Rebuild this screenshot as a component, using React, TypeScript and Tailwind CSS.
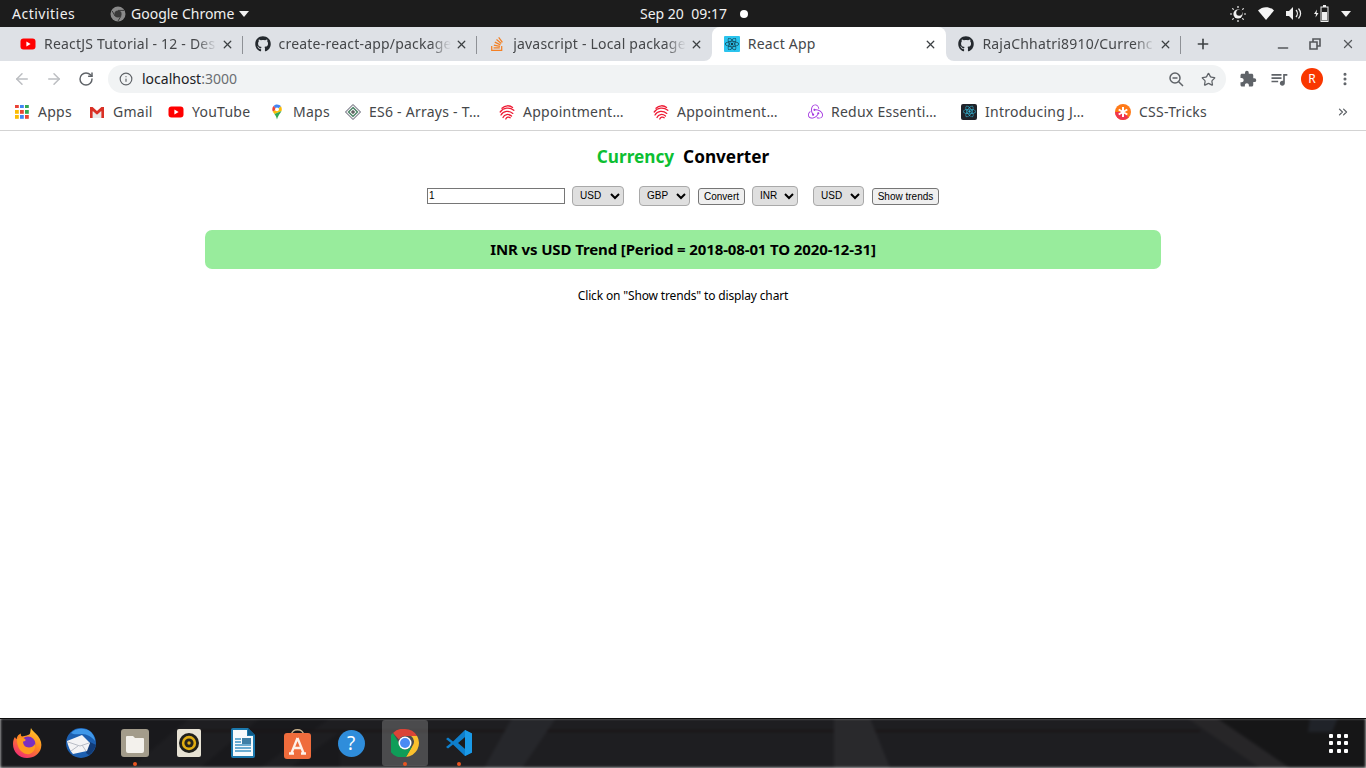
import { ArrowLeft, ArrowRight, RotateCw, Info, Star, MoreVertical, X, Plus, Minus, ChevronsRight } from "lucide-react"
import { FaGithub, FaReact, FaStackOverflow } from "react-icons/fa"
import { MdExtension, MdQueueMusic } from "react-icons/md"
import { SiRedux } from "react-icons/si"
import type { ReactNode } from "react"

const uiFont = "font-['Noto_Sans','Open_Sans',sans-serif]"

// Favicons
function YoutubeIcon() {
  return (
    <svg width="16" height="16" viewBox="0 0 16 16">
      <rect x="0.5" y="2.5" width="15" height="11" rx="3" fill="#f00" />
      <path d="M6.4 5.4 10.6 8l-4.2 2.6z" fill="#fff" />
    </svg>
  )
}

function ReactFavicon() {
  return (
    <div className="flex h-4 w-4 items-center justify-center rounded-[1px] bg-[#2bc4ee]">
      <FaReact size={14} color="#123a4a" />
    </div>
  )
}

function AppsIcon() {
  const colors = ["#ea4335", "#4285f4", "#34a853", "#fbbc05", "#ea4335", "#34a853", "#fbbc05", "#4285f4", "#ea4335"]
  return (
    <div className="grid h-[14px] w-[14px] grid-cols-3 gap-[1.5px]">
      {colors.map((c, i) => (
        <svg key={i} width="3.8" height="3.8" viewBox="0 0 4 4">
          <rect width="4" height="4" fill={c} />
        </svg>
      ))}
    </div>
  )
}

function GmailIcon() {
  return (
    <svg width="16" height="16" viewBox="0 0 16 16">
      <path d="M1 3h2.6L8 7l4.4-4H15v11h-2.8V7.2L8 11 3.8 7.2V14H1z" fill="#d93025" />
      <path d="M3.8 7.2 8 11l4.2-3.8V14H3.8z" fill="#e8e8e8" />
    </svg>
  )
}

function MapsIcon() {
  return (
    <svg width="16" height="16" viewBox="0 0 16 16">
      <path d="M8 0.5c-1.4 0-2.7.6-3.5 1.6L8 5.5l4-3.2C11.200 1.200 9.700.5 8 .5z" fill="#4285f4" />
      <path d="M4.500 2.100A5 5 0 0 0 3.300 5.300c0 .9.2 1.600.5 2.300L8 5.500z" fill="#ea4335" />
      <path d="M12 2.300 8 5.500l-4.200 2.100c.4.900 1 1.700 1.600 2.500L12.500 7c.2-.5.300-1 .300-1.700 0-1.100-.3-2.100-.8-3z" fill="#fbbc05" />
      <path d="M5.400 10.100C6.300 11.300 7.300 12.600 8 15.500c.7-2.900 2-4.500 3-5.900.6-.8 1.100-1.700 1.500-2.600z" fill="#34a853" />
      <circle cx="8" cy="5.300" r="1.900" fill="#fff" />
    </svg>
  )
}

function Es6Icon() {
  return (
    <svg width="16" height="16" viewBox="0 0 16 16">
      <path d="M8 .5 15.500 8 8 15.500.5 8z" fill="#f4f4f4" stroke="#556" strokeWidth="1" />
      <path d="M8 3.500 12.500 8 8 12.500 3.500 8z" fill="none" stroke="#3d7a5a" strokeWidth="1.200" />
      <path d="M6 8h4M8 6v4" stroke="#333" strokeWidth="1" />
    </svg>
  )
}

function FingerprintIcon() {
  return (
    <svg width="16" height="16" viewBox="0 0 16 16" fill="none" stroke="#ee1c34" strokeWidth="1.300" strokeLinecap="round">
      <path d="M3 4.200C6 1.200 10.500 1 13.600 3.400" />
      <path d="M1.200 8C4.500 3.500 10.500 3 14.800 6.300" />
      <path d="M2 11c2.500-4.200 8-4.800 11.800-1.600" />
      <path d="M4 13.500c1.500-3.400 5.500-4 8.500-1.500" />
      <path d="M6.800 15c.8-2 2.800-2.500 4.400-1.300" />
    </svg>
  )
}

function CssTricksIcon() {
  return (
    <svg width="16" height="16" viewBox="0 0 16 16">
      <circle cx="8" cy="8" r="8" fill="#ff7a18" />
      <path d="M0 8a8 8 0 0 0 8 8 8 8 0 0 0 5.700-2.400L8 8z" fill="#f0354f" />
      <path d="M8 3v10M3.700 5.500l8.600 5M3.700 10.500l8.600-5" stroke="#fff" strokeWidth="2" />
    </svg>
  )
}

function Tab({ icon, title, active, separator, rounded }: { icon: ReactNode; title: string; active?: boolean; separator?: boolean; rounded?: string }) {
  return (
    <div className={`relative flex h-full w-[234.6px] items-center pl-3 pr-[9px] ${active ? "rounded-t-[8px] bg-white" : rounded ?? ""}`}>
      {active && (
        <>
          <div className="absolute bottom-0 left-[-8px] h-2 w-2 bg-white">
            <div className="h-full w-full rounded-br-[8px] bg-[#dee1e6]" />
          </div>
          <div className="absolute bottom-0 right-[-8px] h-2 w-2 bg-white">
            <div className="h-full w-full rounded-bl-[8px] bg-[#dee1e6]" />
          </div>
        </>
      )}
      <div className="flex h-4 w-4 shrink-0 items-center justify-center">{icon}</div>
      <div className={`mb-[2px] ml-2 min-w-0 flex-1 overflow-hidden whitespace-nowrap text-[14px] tracking-[0.2px] text-[#45474a] ${active ? "" : "[mask-image:linear-gradient(to_right,black_88%,transparent_100%)]"}`}>
        {title}
      </div>
      <X size={13} strokeWidth={2.4} className="ml-1 shrink-0 text-[#3c4043]" />
      {separator && <div className="absolute right-0 top-[9px] h-[18px] w-px bg-[#8e9196]" />}
    </div>
  )
}

function Bookmark({ icon, label, width }: { icon: ReactNode; label: string; width: string }) {
  return (
    <div className={`flex shrink-0 items-center gap-2 ${width}`}>
      <div className="flex h-4 w-4 shrink-0 items-center justify-center">{icon}</div>
      <span className="whitespace-nowrap text-[14px] tracking-[0.25px] text-[#45474a]">{label}</span>
    </div>
  )
}

// Dock icons
function FirefoxIcon() {
  return (
    <svg width="30" height="32" viewBox="0 0 30 32">
      <defs>
        <linearGradient id="ff" x1="0.8" y1="0" x2="0.2" y2="1">
          <stop offset="0" stopColor="#ffc92e" />
          <stop offset="0.45" stopColor="#ff8a1e" />
          <stop offset="1" stopColor="#f0247a" />
        </linearGradient>
      </defs>
      <path d="M19 1c1 3 5 5 7 8 3 4 4 8 3 12-1.500 6-7 10-14 10C7 31 1 25 1 17c0-3 .8-5.500 2-7 .3 1 .8 1.800 1.500 2.300C5 9 7 7 9 6.500c-.5 1.500 0 2.500 1 3 3-1 7-1 8-3 .5-2 .5-4 1-5.500z" fill="url(#ff)" />
      <circle cx="16" cy="17" r="7.500" fill="#7a2fc0" />
      <path d="M5 12c3-2 6-1.500 8 0 1.500 1.200 0 2.500-2 2.500 0 3 2 6 6 6s6-3 6.500-5C24 23 20 28 14.500 27 9 26 4.500 20 5 12z" fill="#ff9a1f" />
    </svg>
  )
}

function ThunderbirdIcon() {
  return (
    <svg width="32" height="32" viewBox="0 0 32 32">
      <circle cx="16" cy="16" r="15" fill="#1c5fb0" />
      <path d="M6 6c4-5 14-6 20-1 3 3 4 7 4 9-3-4-8-7-13-7-4 0-8 1-11-1z" fill="#3f97e8" />
      <path d="M24 28c3-2 6-6 7-10l-6-3-4 11z" fill="#123c78" />
      <path d="M2 14 17 8l8 8-3 8-14 3c-3-3-5-8-6-13z" fill="#f3f3f5" />
      <path d="M3 15l12 4 9-3M6 24l7-5M21 24l-4-6" fill="none" stroke="#b8bcc6" strokeWidth="1" />
    </svg>
  )
}

function FilesIcon() {
  return (
    <svg width="28" height="28" viewBox="0 0 28 28">
      <rect width="28" height="28" rx="3" fill="#a39c8b" />
      <path d="M5 8a1 1 0 0 1 1-1h6l2 2h8a1 1 0 0 1 1 1v12a2 2 0 0 1-2 2H7a2 2 0 0 1-2-2z" fill="#f3f1ec" />
    </svg>
  )
}

function RhythmboxIcon() {
  return (
    <svg width="24" height="28" viewBox="0 0 24 28">
      <rect width="24" height="28" rx="2" fill="#e7e2d4" />
      <circle cx="12" cy="14" r="10" fill="#1f1f1c" />
      <circle cx="12" cy="14" r="7.200" fill="#e0ad12" />
      <circle cx="12" cy="14" r="4.600" fill="#26241d" />
      <circle cx="12" cy="14" r="1.700" fill="#e0ad12" />
    </svg>
  )
}

function WriterIcon() {
  return (
    <svg width="24" height="30" viewBox="0 0 24 30">
      <path d="M0 2a2 2 0 0 1 2-2h15l7 7v21a2 2 0 0 1-2 2H2a2 2 0 0 1-2-2z" fill="#1b78ad" />
      <path d="M2 2h14v6h6v20H2z" fill="#f6fafc" />
      <path d="M17 0l7 7h-7z" fill="#0d5b88" />
      <rect x="11" y="10" width="9" height="6" fill="#3d7fa6" />
      <path d="M4 11h6M4 14h6M4 17h16M4 20h16M4 23h16" stroke="#3d93c2" strokeWidth="1.500" />
    </svg>
  )
}

function StoreIcon() {
  return (
    <svg width="27" height="31" viewBox="0 0 27 31">
      <path d="M7.500 7c0-7 12-7 12 0" fill="none" stroke="#cdb48e" strokeWidth="1.500" />
      <rect y="5" width="27" height="26" rx="3" fill="#ef6c3c" />
      <path d="M13.500 10 7.500 25M13.500 10l6 15M9.500 20h8M5 25.500h5M17 25.500h5" stroke="#fdf1ea" strokeWidth="2.300" fill="none" />
    </svg>
  )
}

function ChromeIcon({ size = 28 }: { size?: number }) {
  return (
    <svg width={size} height={size} viewBox="0 0 28 28">
      <path d="M14 0a14 14 0 0 1 12.100 7H14a7 7 0 0 0-6.100 3.500L2 3.900A14 14 0 0 1 14 0z" fill="#db4437" />
      <path d="M26.100 7A14 14 0 0 1 15 28l6.100-10.500A7 7 0 0 0 20.100 7z" fill="#fbc02d" />
      <path d="M15 28A14 14 0 0 1 2 3.900l5.900 10.100a7 7 0 0 0 8.100 6.600l5.100-3.100z" fill="#0f9d58" />
      <circle cx="14" cy="14" r="6.500" fill="#fff" />
      <circle cx="14" cy="14" r="5" fill="#4a8af4" />
    </svg>
  )
}

function VscodeIcon() {
  return (
    <svg width="28" height="28" viewBox="0 0 28 28">
      <path d="M20 1 27 4.500v19L20 27 8 15.500 3 19.500 1 18l5-4-5-4 2-1.500 5 4z" fill="#0e7fcd" />
      <path d="M20 1 27 4.500v19L20 27V20L13 14l7-6z" fill="#1a9ae8" />
      <path d="M20 8l-7 6 7 6z" fill="#1c1c1e" />
    </svg>
  )
}

function DockSlot({ children, running, active }: { children: ReactNode; running?: boolean; active?: boolean }) {
  return (
    <div className="relative flex h-full w-[54px] items-center justify-center">
      {active && <div className="absolute left-[4px] top-[2px] h-[46px] w-[46px] rounded-[3px] bg-white/20" />}
      <div className="relative flex items-center justify-center">{children}</div>
      {running && <div className="absolute bottom-[2px] left-[25px] h-1 w-1 rounded-full bg-[#e95420]" />}
    </div>
  )
}

function Wallpaper() {
  return (
    <>
      <svg className="absolute inset-0 blur-[1.5px]" width="1366" height="50" viewBox="0 0 1366 50">
        <rect width="1366" height="50" fill="#1e1e21" />
        <rect width="340" height="50" fill="#19191c" />
        <path d="M130 50 190 0h70l-60 50zM260 50 330 0h30l-70 50z" fill="#1e1e21" />
        <rect x="200" y="12" width="1000" height="2" fill="#191415" />
        <path d="M512 0h44l-34 50h-38z" fill="#26272b" />
        <path d="M834 0h36l20 50h-56z" fill="#29292c" />
        <path d="M1187 0h30l73 50h-30z" fill="#272628" />
        <path d="M1217 0h149v50h-76z" fill="#161617" />
        <path d="M1310 0h28l-6 14h-24z" fill="#202329" />
      </svg>
      <div className="absolute inset-x-0 top-0 h-px bg-[#0c0c0c]" />
    </>
  )
}

function FormSelect({ value, width }: { value: string; width: string }) {
  return (
    <select
      defaultValue={value}
      className={`h-[20px] appearance-auto rounded-[4px] border border-[#a9a9a9] bg-[#dfdfdf] pb-[1px] pl-[3px] text-[10px] text-black ${width}`}
    >
      <option>{value}</option>
    </select>
  )
}

export default function App() {
  return (
    <div className={`flex h-screen w-full flex-col overflow-hidden bg-white ${uiFont}`}>
      {/* GNOME top bar */}
      <div className="flex h-[27px] shrink-0 items-center bg-[#1c1c1c] text-[14px] text-[#f0f0f0]">
        <div className="flex w-[640px] shrink-0 items-center">
          <span className="ml-3 w-[98px] tracking-[0.5px]">Activities</span>
          <ChromeGray />
          <span className="ml-[5px]">Google Chrome</span>
          <Caret className="ml-[5px]" />
        </div>
        <span className="whitespace-pre">Sep 20  09:17</span>
        <div className="ml-[13px] h-[8px] w-[8px] rounded-full bg-white" />
        <div className="flex-1" />
        <div className="flex items-center">
          <TrayIcons />
        </div>
      </div>

      {/* Chrome tab strip */}
      <div className="flex h-[34px] shrink-0 items-center bg-[#dee1e6] pl-2">
        <Tab icon={<YoutubeIcon />} title="ReactJS Tutorial - 12 - Des" separator />
        <Tab icon={<FaGithub size={16} color="#24292e" />} title="create-react-app/package" separator />
        <Tab icon={<FaStackOverflow size={16} color="#f48024" />} title="javascript - Local package" />
        <Tab icon={<ReactFavicon />} title="React App" active />
        <Tab icon={<FaGithub size={16} color="#24292e" />} title="RajaChhatri8910/Currenc" separator />
        <Plus size={16} strokeWidth={2.4} className="ml-[14px] text-[#3c4043]" />
        <div className="ml-[64px] flex items-center text-[#55585c]">
          <Minus size={16} strokeWidth={2} className="mt-[8px]" />
          <svg width="12" height="12" viewBox="0 0 12 12" fill="none" stroke="#55585c" strokeWidth="1.600" className="ml-[18px]">
            <path d="M1 4h7v7H1zM4 4V1h7v7H8" />
          </svg>
          <X size={14} strokeWidth={2.2} className="ml-[20px]" />
        </div>
      </div>

      {/* Toolbar */}
      <div className="flex h-[32px] shrink-0 items-center bg-white pt-1 text-[#5f6368]">
        <ArrowLeft size={18} strokeWidth={2} className="ml-[13px] text-[#bcbec2]" />
        <ArrowRight size={18} strokeWidth={2} className="ml-[14px] text-[#bcbec2]" />
        <RotateCw size={16} strokeWidth={2.2} className="ml-[15px] text-[#5f6368]" />
        <div className="ml-[14px] flex h-7 w-[1118px] items-center rounded-full bg-[#f1f3f4] pl-[11px] pr-[10px]">
          <Info size={14} strokeWidth={2} className="text-[#5f6368]" />
          <span className="mb-[2px] ml-[9px] text-[14px] text-[#202124]">
            localhost<span className="text-[#6b6e72]">:3000</span>
          </span>
          <div className="flex-1" />
          <ZoomOutIcon />
          <Star size={15} strokeWidth={2} className="ml-[17px] text-[#5f6368]" />
        </div>
        <MdExtension size={18} className="ml-[13px] text-[#5f6368]" />
        <MdQueueMusic size={20} className="ml-[12px] text-[#5f6368]" />
        <div className="ml-[12px] flex h-[22px] w-[22px] items-center justify-center rounded-full bg-[#f93700] text-[12px] text-white">R</div>
        <MoreVertical size={16} strokeWidth={2.6} className="ml-[14px] text-[#5f6368]" />
      </div>

      {/* Bookmarks bar */}
      <div className="flex h-[38px] shrink-0 items-center border-b border-[#d3d3d3] bg-white pl-[14px]">
        <Bookmark icon={<AppsIcon />} label="Apps" width="w-[75px]" />
        <Bookmark icon={<GmailIcon />} label="Gmail" width="w-[79px]" />
        <Bookmark icon={<YoutubeIcon />} label="YouTube" width="w-[101px]" />
        <Bookmark icon={<MapsIcon />} label="Maps" width="w-[76px]" />
        <Bookmark icon={<Es6Icon />} label="ES6 - Arrays - T…" width="w-[154px]" />
        <Bookmark icon={<FingerprintIcon />} label="Appointment…" width="w-[154px]" />
        <Bookmark icon={<FingerprintIcon />} label="Appointment…" width="w-[154px]" />
        <Bookmark icon={<SiRedux size={15} color="#a335e0" />} label="Redux Essenti…" width="w-[154px]" />
        <Bookmark icon={<div className="flex h-4 w-4 items-center justify-center rounded-[2px] bg-[#20232a]"><FaReact size={13} color="#35b8d8" /></div>} label="Introducing J…" width="w-[154px]" />
        <Bookmark icon={<CssTricksIcon />} label="CSS-Tricks" width="w-[154px]" />
        <div className="flex-1" />
        <ChevronsRight size={14} strokeWidth={2.2} className="mr-[16px] text-[#5f6368]" />
      </div>

      {/* Page */}
      <main className="flex min-h-0 flex-1 flex-col items-center bg-white text-black">
        <h1 className="mt-[14px] flex h-[24px] items-center gap-[9px] text-[17.2px] font-bold">
          <span className="text-[#0cbf32]">Currency</span>
          <span>Converter</span>
        </h1>
        <div className="mt-[17px] flex h-[20px] items-center font-['Liberation_Sans',sans-serif] text-[10px]">
          <input
            defaultValue="1"
            className="h-[16px] w-[138px] border border-[#767676] bg-white px-[1px] pb-[1px] text-[10px] text-black"
          />
          <FormSelect value="USD" width="ml-[7px] w-[52px]" />
          <FormSelect value="GBP" width="ml-[15px] w-[51px]" />
          <button className="ml-[8px] h-[17px] w-[47px] rounded-[3px] border border-[#767676] bg-[#efefef] pb-[2px] text-[10px]">Convert</button>
          <FormSelect value="INR" width="ml-[7px] w-[46px]" />
          <FormSelect value="USD" width="ml-[15px] w-[51px]" />
          <button className="ml-[8px] h-[17px] w-[67px] rounded-[3px] border border-[#767676] bg-[#efefef] pb-[2px] text-[10px]">Show trends</button>
        </div>
        <div className="mt-[24px] flex h-[39px] w-[956px] items-center justify-center rounded-[7px] bg-[#98ec9c] text-[15px] font-bold tracking-[-0.12px]">
          INR vs USD Trend [Period = 2018-08-01 TO 2020-12-31]
        </div>
        <p className="mt-[18px] text-[12px] tracking-[-0.15px]">Click on "Show trends" to display chart</p>
      </main>

      {/* Ubuntu dock */}
      <div className="relative h-[50px] shrink-0 overflow-hidden">
        <Wallpaper />
        <div className="relative flex h-full items-center">
          <DockSlot><FirefoxIcon /></DockSlot>
          <DockSlot><ThunderbirdIcon /></DockSlot>
          <DockSlot running><FilesIcon /></DockSlot>
          <DockSlot><RhythmboxIcon /></DockSlot>
          <DockSlot><WriterIcon /></DockSlot>
          <DockSlot><StoreIcon /></DockSlot>
          <DockSlot>
            <div className="flex h-[27px] w-[27px] items-center justify-center rounded-full bg-[#2f8ddb] text-[19px] text-white">?</div>
          </DockSlot>
          <DockSlot running active><ChromeIcon /></DockSlot>
          <DockSlot running><VscodeIcon /></DockSlot>
          <div className="flex-1" />
          <div className="mr-[18px] grid grid-cols-3 gap-[3.5px]">
            {Array.from({ length: 9 }).map((_, i) => (
              <div key={i} className="h-[4px] w-[4px] rounded-[1px] bg-white" />
            ))}
          </div>
        </div>
      </div>
    </div>
  )
}

function ChromeGray() {
  return (
    <svg width="16" height="16" viewBox="0 0 16 16" className="shrink-0">
      <circle cx="8" cy="8" r="7.500" fill="#8a8a8a" />
      <circle cx="8" cy="8" r="3.600" fill="#3a3a3a" />
      <path d="M8 4.400h6M5 10l-2.800-5M10.800 10.400 8 15" stroke="#3a3a3a" strokeWidth="1" />
    </svg>
  )
}

function Caret({ className }: { className?: string }) {
  return (
    <svg width="10" height="6" viewBox="0 0 10 6" className={className}>
      <path d="M0 0h10L5 6z" fill="#f0f0f0" />
    </svg>
  )
}

function ZoomOutIcon() {
  return (
    <svg width="15" height="15" viewBox="0 0 15 15" fill="none" stroke="#5f6368" strokeWidth="1.500">
      <circle cx="6" cy="6" r="5" />
      <path d="M9.700 9.700 14 14M3.500 6h5" />
    </svg>
  )
}

function TrayIcons() {
  return (
    <>
      <svg width="16" height="16" viewBox="0 0 16 16" fill="#f0f0f0">
        <circle cx="8" cy="8" r="4.600" />
        <path d="M8 0v2M8 14v2M0 8h2M14 8h2M2.300 2.300l1.400 1.400M12.300 12.300l1.400 1.400M2.300 13.700l1.400-1.400M12.300 3.700l1.400-1.400" stroke="#f0f0f0" strokeWidth="1.200" />
        <circle cx="9.200" cy="6.800" r="3" fill="#1c1c1c" />
      </svg>
      <svg width="16" height="13" viewBox="0 0 16 13" className="ml-[12px]">
        <path d="M0 3.500C4.500-1 11.500-1 16 3.500L8 13z" fill="#f5f5f5" />
      </svg>
      <svg width="16" height="13" viewBox="0 0 16 13" className="ml-[12px]" fill="#f0f0f0">
        <path d="M0 4h3l4-4v13L3 9H0z" />
        <path d="M10 3c1.800 2 1.800 5 0 7M12.500 1.500c2.500 3 2.500 7 0 10" fill="none" stroke="#f0f0f0" strokeWidth="1.200" />
      </svg>
      <svg width="16" height="17" viewBox="0 0 16 17" className="ml-[12px]" fill="#f0f0f0">
        <path d="M3 4.500 0 9h2L1.500 12.500 4.500 8h-2z" />
        <path d="M9 0h3v1.500h2.500V17H6.500V1.500H9zM7.500 2.500v13.500h6V2.500z" />
        <rect x="8" y="7" width="5" height="8.500" />
      </svg>
      <Caret className="ml-[11px] mr-[15px]" />
    </>
  )
}
